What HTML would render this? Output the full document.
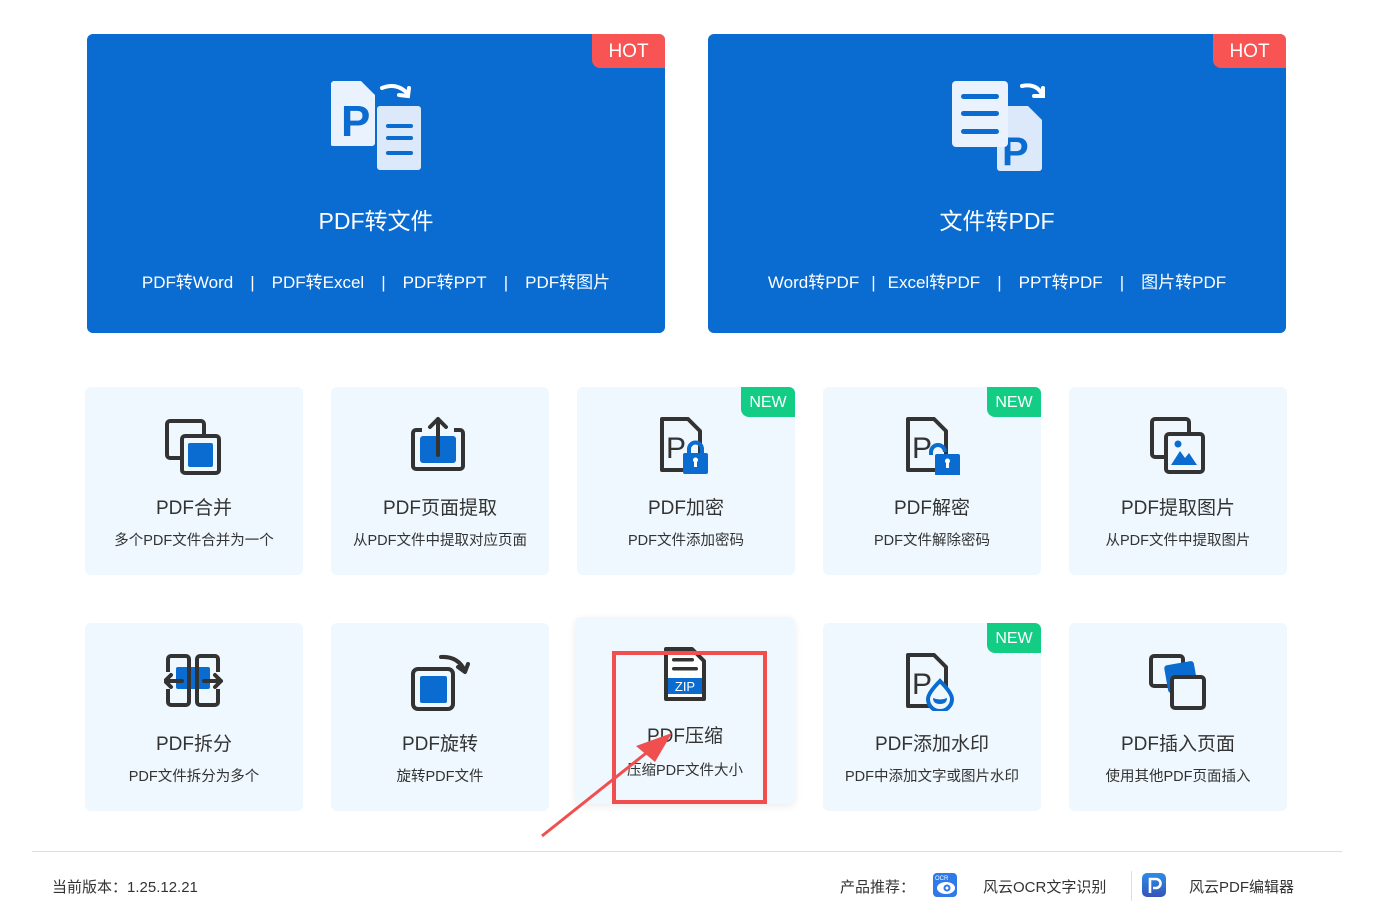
<!DOCTYPE html>
<html><head><meta charset="utf-8"><style>
*{margin:0;padding:0;box-sizing:border-box}
body{width:1374px;height:919px;background:#fff;position:relative;overflow:hidden;font-family:"Liberation Sans","Noto Sans CJK SC",sans-serif;color:#333}
.big{position:absolute;top:34px;width:578px;height:299px;background:#0a6bd0;border-radius:6px;color:#fff;text-align:center}
.hot{position:absolute;right:0;top:0;width:73px;height:34px;background:#f95454;border-radius:0 6px 0 8px;font-size:19px;line-height:36px;text-align:center;color:#fff}
.big .t{position:absolute;top:168px;left:0;right:0;font-size:23px}
.big .l{position:absolute;top:234px;left:0;right:0;font-size:17px;word-spacing:0}
.big .l span{margin:0 17px}
.big svg{position:absolute;left:244px;top:46px}
.c{position:absolute;width:218px;height:188px;background:#eff8fe;border-radius:6px;text-align:center}
.c svg{position:absolute;left:79px;top:28px}
.c .t{position:absolute;top:106px;left:0;right:0;font-size:19px;color:#333}
.c .s{position:absolute;top:142px;left:0;right:0;font-size:14.5px;color:#333}
.new{position:absolute;right:0;top:0;width:54px;height:30px;background:#13cd85;color:#fff;font-size:16px;line-height:32px;border-radius:0 6px 0 8px;text-align:center}
.foot{position:absolute;top:851px;left:32px;width:1310px;border-top:1px solid #ddd}
</style></head><body>

<div class="big" style="left:87px">
 <div class="hot">HOT</div>
 <svg width="90" height="92" viewBox="0 0 90 92">
  <rect x="46" y="26" width="44" height="64" rx="3" fill="#dbe9fb"/>
  <rect x="55" y="44" width="27" height="4" rx="2" fill="#0a6bd0"/><rect x="55" y="56" width="27" height="4" rx="2" fill="#0a6bd0"/><rect x="55" y="71" width="27" height="4" rx="2" fill="#0a6bd0"/>
  <path d="M2 1H30L44 15V63a3 3 0 0 1-3 3H2a3 3 0 0 1-3-3V4z" fill="#eaf2fd"/>
  <text x="10" y="56" font-size="44" font-family="Liberation Sans" font-weight="bold" fill="#0a6bd0">P</text>
  <path d="M51 8q15-6 26 6" stroke="#fff" stroke-width="4" fill="none" stroke-linecap="round"/><path d="M68 15l9 1 1-8" stroke="#fff" stroke-width="4" fill="none" stroke-linecap="round"/>
 </svg>
 <div class="t">PDF转文件</div>
 <div class="l">PDF转Word<span>|</span>PDF转Excel<span>|</span>PDF转PPT<span>|</span>PDF转图片</div>
</div>

<div class="big" style="left:708px">
 <div class="hot">HOT</div>
 <svg width="95" height="92" viewBox="0 0 95 92">
  <path d="M48 26H76L90 40V88a3 3 0 0 1-3 3H48a3 3 0 0 1-3-3V29z" fill="#dbe9fb"/>
  <text x="50" y="85" font-size="40" font-family="Liberation Sans" font-weight="bold" fill="#0a6bd0">P</text>
  <rect x="0" y="1" width="56" height="66" rx="4" fill="#eaf2fd"/>
  <rect x="9" y="14" width="38" height="5" rx="2.5" fill="#0a6bd0"/><rect x="9" y="31" width="38" height="5" rx="2.5" fill="#0a6bd0"/><rect x="9" y="49" width="38" height="5" rx="2.5" fill="#0a6bd0"/>
  <path d="M70 6q14-3 20 8" stroke="#fff" stroke-width="4" fill="none" stroke-linecap="round"/><path d="M82 16l9 0 0-8" stroke="#fff" stroke-width="4" fill="none" stroke-linecap="round"/>
 </svg>
 <div class="t">文件转PDF</div>
 <div class="l">Word转PDF<span style="margin:0 12px">|</span>Excel转PDF<span>|</span>PPT转PDF<span>|</span>图片转PDF</div>
</div>

<!-- row1 -->
<div class="c" style="left:85px;top:387px">
 <svg width="60" height="60" viewBox="0 0 60 60"><rect x="3" y="6" width="37" height="37" rx="3" fill="none" stroke="#333" stroke-width="4"/><rect x="18" y="21" width="37" height="37" rx="3" fill="#eff8fe" stroke="#333" stroke-width="4"/><rect x="24" y="28" width="25" height="24" rx="2" fill="#0a6bd0"/></svg>
 <div class="t">PDF合并</div><div class="s">多个PDF文件合并为一个</div>
</div>
<div class="c" style="left:331px;top:387px">
 <svg width="60" height="60" viewBox="0 0 60 60"><path d="M12 15H6a3 3 0 0 0-3 3V51a3 3 0 0 0 3 3H50a3 3 0 0 0 3-3V18a3 3 0 0 0-3-3H44" fill="none" stroke="#333" stroke-width="4"/><rect x="10" y="21" width="36" height="27" rx="3" fill="#0a6bd0"/><path d="M28 40V4M20 12l8-8 8 8" stroke="#333" stroke-width="4" fill="none" stroke-linecap="round" stroke-linejoin="round"/></svg>
 <div class="t">PDF页面提取</div><div class="s">从PDF文件中提取对应页面</div>
</div>
<div class="c" style="left:577px;top:387px">
 <div class="new">NEW</div>
 <svg width="60" height="60" viewBox="0 0 60 60"><path d="M6 4H32L44 16V55H6z" fill="none" stroke="#333" stroke-width="4" stroke-linejoin="round"/><text x="10" y="43" font-size="30" font-family="Liberation Sans" fill="#333">P</text><path d="M33 38v-4a6.5 6.5 0 0 1 13 0v4" fill="none" stroke="#0a6bd0" stroke-width="4"/><rect x="27" y="38" width="25" height="21" rx="2" fill="#0a6bd0"/><rect x="38" y="44" width="3" height="8" fill="#fff"/><circle cx="39.5" cy="45" r="2.5" fill="#fff"/></svg>
 <div class="t">PDF加密</div><div class="s">PDF文件添加密码</div>
</div>
<div class="c" style="left:823px;top:387px">
 <div class="new">NEW</div>
 <svg width="60" height="60" viewBox="0 0 60 60"><path d="M6 4H32L44 16V55H6z" fill="none" stroke="#333" stroke-width="4" stroke-linejoin="round"/><text x="10" y="43" font-size="30" font-family="Liberation Sans" fill="#333">P</text><path d="M29 40v-3a7 7 0 0 1 14 0" fill="none" stroke="#0a6bd0" stroke-width="4"/><rect x="33" y="39" width="25" height="22" rx="2" fill="#0a6bd0"/><rect x="44" y="45" width="3" height="8" fill="#fff"/><circle cx="45.5" cy="46" r="2.5" fill="#fff"/></svg>
 <div class="t">PDF解密</div><div class="s">PDF文件解除密码</div>
</div>
<div class="c" style="left:1069px;top:387px">
 <svg width="60" height="60" viewBox="0 0 60 60"><rect x="4" y="4" width="37" height="38" rx="3" fill="none" stroke="#333" stroke-width="4"/><rect x="18" y="19" width="37" height="38" rx="3" fill="#eff8fe" stroke="#333" stroke-width="4"/><circle cx="30" cy="29" r="3.5" fill="#0a6bd0"/><path d="M23 50l9-14 5 7 4-5 8 12z" fill="#0a6bd0"/></svg>
 <div class="t">PDF提取图片</div><div class="s">从PDF文件中提取图片</div>
</div>

<!-- row2 -->
<div class="c" style="left:85px;top:623px">
 <svg width="60" height="60" viewBox="0 0 60 60"><rect x="12" y="16" width="34" height="22" rx="2" fill="#0a6bd0"/><path d="M4 21V8a3 3 0 0 1 3-3H22a3 3 0 0 1 3 3V51a3 3 0 0 1-3 3H7a3 3 0 0 1-3-3V38" fill="none" stroke="#333" stroke-width="4"/><path d="M54 21V8a3 3 0 0 0-3-3H36a3 3 0 0 0-3 3V51a3 3 0 0 0 3 3H51a3 3 0 0 0 3-3V38" fill="none" stroke="#333" stroke-width="4"/><path d="M1 30h17M7 24l-6 6 6 6M40 30h17M51 24l6 6-6 6" fill="none" stroke="#333" stroke-width="4" stroke-linecap="round" stroke-linejoin="round"/></svg>
 <div class="t">PDF拆分</div><div class="s">PDF文件拆分为多个</div>
</div>
<div class="c" style="left:331px;top:623px">
 <svg width="60" height="60" viewBox="0 0 60 60"><rect x="3" y="18" width="40" height="40" rx="5" fill="none" stroke="#333" stroke-width="4"/><rect x="10" y="25" width="27" height="27" rx="2" fill="#0a6bd0"/><path d="M31 6q17-1 24 14M48 16l7 5 3-8" fill="none" stroke="#333" stroke-width="4" stroke-linecap="round" stroke-linejoin="round"/></svg>
 <div class="t">PDF旋转</div><div class="s">旋转PDF文件</div>
</div>
<div class="c" style="left:575px;top:617px;height:187px;width:220px;box-shadow:0 2px 8px rgba(0,0,0,.08)">
 <svg width="60" height="60" viewBox="0 0 60 60" style="left:81px;top:28px"><path d="M10 4H36L48 16V54H10z" fill="#fff" stroke="#333" stroke-width="4" stroke-linejoin="round"/><rect x="16" y="13" width="22" height="3.5" rx="1.75" fill="#333"/><rect x="16" y="22" width="26" height="3.5" rx="1.75" fill="#333"/><rect x="12" y="33" width="34" height="16" fill="#0a6bd0"/><text x="29" y="46" font-size="13" text-anchor="middle" font-family="Liberation Sans" fill="#fff">ZIP</text></svg>
 <div class="t" style="top:104px">PDF压缩</div><div class="s" style="top:142px">压缩PDF文件大小</div>
</div>
<div class="c" style="left:823px;top:623px">
 <div class="new">NEW</div>
 <svg width="60" height="60" viewBox="0 0 60 60"><path d="M6 4H32L44 16V55H6z" fill="none" stroke="#333" stroke-width="4" stroke-linejoin="round"/><text x="10" y="43" font-size="30" font-family="Liberation Sans" fill="#333">P</text><path d="M38 30q-12 12-12 18a12 12 0 0 0 24 0q0-6-12-18z" fill="#eff8fe" stroke="#0a6bd0" stroke-width="4"/><path d="M31 47q7 3 14 0q0 6-7 6t-7-6z" fill="#0a6bd0"/></svg>
 <div class="t">PDF添加水印</div><div class="s">PDF中添加文字或图片水印</div>
</div>
<div class="c" style="left:1069px;top:623px">
 <svg width="60" height="60" viewBox="0 0 60 60"><rect x="3" y="5" width="32" height="30" rx="3" fill="none" stroke="#333" stroke-width="4"/><rect x="18" y="12" width="30" height="28" rx="3" fill="#0a6bd0" transform="rotate(-10 33 26)"/><rect x="24" y="26" width="32" height="31" rx="3" fill="#eff8fe" stroke="#333" stroke-width="4"/></svg>
 <div class="t">PDF插入页面</div><div class="s">使用其他PDF页面插入</div>
</div>

<!-- annotation -->
<svg style="position:absolute;left:0;top:0" width="1374" height="919">
 <rect x="614" y="653" width="151" height="149" fill="none" stroke="#f14f4f" stroke-width="4"/>
 <path d="M542 836L650 750" stroke="#f14f4f" stroke-width="3"/>
 <path d="M672 733L636 746L655 762z" fill="#f14f4f"/>
</svg>

<div class="foot"></div>
<div style="position:absolute;left:52px;top:876px;font-size:15px;color:#333">当前版本：1.25.12.21</div>
<div style="position:absolute;left:840px;top:876px;font-size:15px;color:#333">产品推荐：</div>
<svg style="position:absolute;left:933px;top:873px" width="24" height="24" viewBox="0 0 24 24"><rect width="24" height="24" rx="4" fill="#2f7ae8"/><text x="2" y="7" font-size="6" fill="#fff" font-family="Liberation Sans">OCR</text><ellipse cx="13" cy="15" rx="9" ry="6" fill="#fff"/><circle cx="14" cy="15" r="3.5" fill="#2f7ae8"/><circle cx="14" cy="15" r="1.5" fill="#fff"/></svg>
<div style="position:absolute;left:983px;top:876px;font-size:15px;color:#333">风云OCR文字识别</div>
<div style="position:absolute;left:1131px;top:871px;height:30px;border-left:1px solid #ddd"></div>
<svg style="position:absolute;left:1142px;top:873px" width="24" height="24" viewBox="0 0 24 24"><defs><linearGradient id="g" x1="0" y1="0" x2="0" y2="1"><stop offset="0" stop-color="#2b8de8"/><stop offset="1" stop-color="#3654b8"/></linearGradient></defs><rect width="24" height="24" rx="5" fill="url(#g)"/><path d="M8 20V6h6a4.5 4.5 0 0 1 0 9h-3" fill="none" stroke="#fff" stroke-width="2.6"/></svg>
<div style="position:absolute;left:1189px;top:876px;font-size:15px;color:#333">风云PDF编辑器</div>
</body></html>
